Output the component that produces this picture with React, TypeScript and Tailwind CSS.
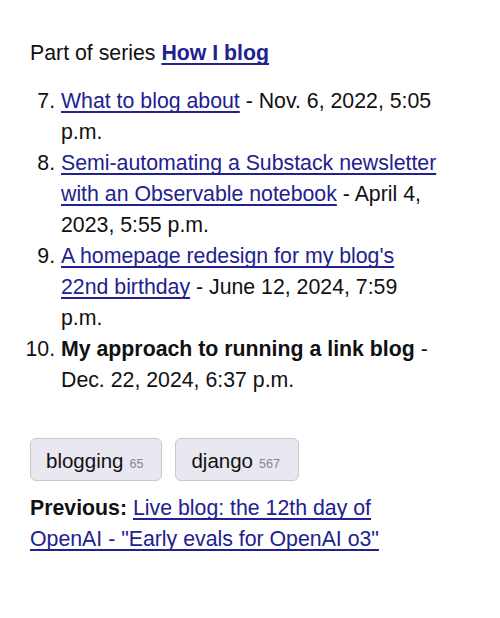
import React from 'react'

const link = 'text-[#21218f] underline decoration-[1.5px] underline-offset-[3px] [text-decoration-skip-ink:none]'

type Entry = { n: number; title: string; date: string; current?: boolean }

const entries: Entry[] = [
  { n: 7, title: 'What to blog about', date: 'Nov. 6, 2022, 5:05 p.m.' },
  { n: 8, title: 'Semi-automating a Substack newsletter with an Observable notebook', date: 'April 4, 2023, 5:55 p.m.' },
  { n: 9, title: "A homepage redesign for my blog's 22nd birthday", date: 'June 12, 2024, 7:59 p.m.' },
  { n: 10, title: 'My approach to running a link blog', date: 'Dec. 22, 2024, 6:37 p.m.', current: true },
]

function Tag({ name, count }: { name: string; count: number }){
  return (
    <a href="#" className="inline-flex items-baseline h-[43px] pt-[9px] pl-[15px] pr-[18px] rounded-[6px] border border-[#c9c7cf] bg-[#e9e7ef] text-[#111]">
      <span className="text-[20.5px] leading-[25px]">{name}</span>
      <span className="ml-[6px] text-[12.5px] text-[#888]">{count}</span>
    </a>
  )
}

export default function App(){
  return (
    <div className="min-h-[618px] bg-white text-[#111] pl-[30px] pr-[56px] pt-[38px] text-[21.3px] leading-[31px]" style={{ fontFamily: '"Liberation Sans", Arial, sans-serif' }}>
      <p>Part of series <a href="#" className={`${link} font-bold`}>How I blog</a></p>
      <ol start={7} className="list-decimal pl-[31px] mt-[17px]">
        {entries.map(e => (
          <li key={e.n}>
            {e.current
              ? <strong>{e.title}</strong>
              : <a href="#" className={link}>{e.title}</a>}
            {' - '}{e.date}
          </li>
        ))}
      </ol>
      <div className="flex gap-[13px] mt-[42px]">
        <Tag name="blogging" count={65} />
        <Tag name="django" count={567} />
      </div>
      <p className="mt-[12px]">
        <strong>Previous:</strong> <a href="#" className={link}>Live blog: the 12th day of OpenAI - "Early evals for OpenAI o3"</a>
      </p>
    </div>
  )
}
